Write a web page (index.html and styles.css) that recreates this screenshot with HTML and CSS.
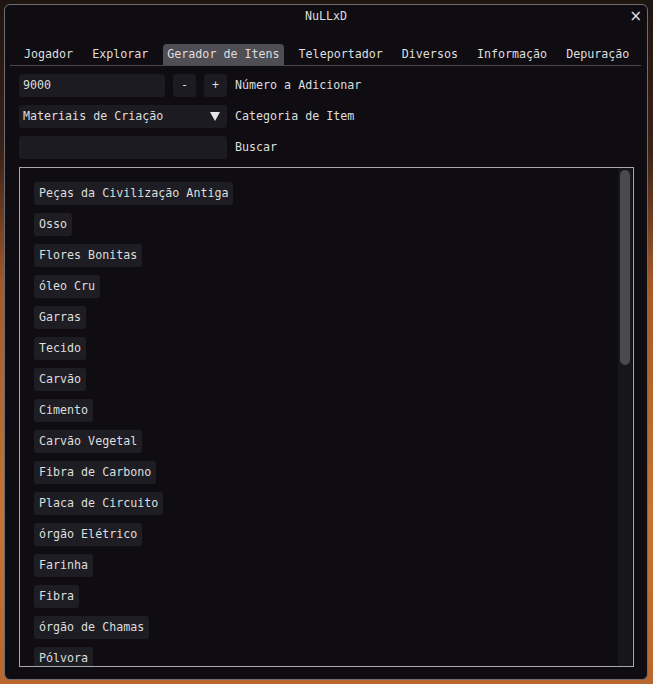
FILE: index.html
```html
<!DOCTYPE html>
<html>
<head>
<meta charset="utf-8">
<link rel="stylesheet" href="styles.css">
</head>
<body>
<div class="window">
  <div class="titlebar">
    <span class="title">NuLLxD</span>
    <span class="close">×</span>
  </div>
  <div class="tabbar">
    <span class="tab">Jogador</span>
    <span class="tab">Explorar</span>
    <span class="tab active">Gerador de Itens</span>
    <span class="tab">Teleportador</span>
    <span class="tab">Diversos</span>
    <span class="tab">Informação</span>
    <span class="tab">Depuração</span>
  </div>
  <div class="controls">
    <div class="row">
      <div class="frame num">9000</div>
      <div class="frame btn">-</div>
      <div class="frame btn">+</div>
      <span class="label">Número a Adicionar</span>
    </div>
    <div class="row">
      <div class="frame combo"><span>Materiais de Criação</span><svg class="arrow" width="10" height="9" viewBox="0 0 10 9"><polygon points="0,0 10,0 5,9" fill="#e6e6e6"/></svg></div>
      <span class="label">Categoria de Item</span>
    </div>
    <div class="row">
      <div class="frame search"></div>
      <span class="label">Buscar</span>
    </div>
  </div>
  <div class="child">
    <div class="list">
      <div class="item">Peças da Civilização Antiga</div>
      <div class="item">Osso</div>
      <div class="item">Flores Bonitas</div>
      <div class="item">óleo Cru</div>
      <div class="item">Garras</div>
      <div class="item">Tecido</div>
      <div class="item">Carvão</div>
      <div class="item">Cimento</div>
      <div class="item">Carvão Vegetal</div>
      <div class="item">Fibra de Carbono</div>
      <div class="item">Placa de Circuito</div>
      <div class="item">órgão Elétrico</div>
      <div class="item">Farinha</div>
      <div class="item">Fibra</div>
      <div class="item">órgão de Chamas</div>
      <div class="item">Pólvora</div>
    </div>
    <div class="scrollbar"><div class="grab"></div></div>
  </div>
</div>
</body>
</html>
```

FILE: styles.css
```css
html, body {
  margin: 0;
  padding: 0;
}
body {
  width: 653px;
  height: 684px;
  overflow: hidden;
  background: linear-gradient(180deg, #1e1410 0%, #3a2216 22%, #a65a2a 42%, #c47434 75%, #b8682e 100%);
  font-family: "DejaVu Sans Mono", "Liberation Mono", monospace;
  font-size: 11.66px;
  color: #dedede;
  padding-top: 4px;
  padding-left: 4px;
  box-sizing: border-box;
}
.window {
  width: 644px;
  height: 676px;
  box-sizing: border-box;
  background: #0f0d12;
  border: 1px solid #6e6d74;
  border-radius: 6px;
  display: flex;
  flex-direction: column;
  overflow: hidden;
}
.titlebar {
  height: 23px;
  display: flex;
  align-items: center;
  justify-content: center;
  position: relative;
}
.title {
  line-height: 23px;
}
.close {
  position: absolute;
  right: 5px;
  top: 0;
  line-height: 23px;
  font-family: "DejaVu Sans", sans-serif;
  font-size: 15px;
  color: #e0e0e0;
}
.tabbar {
  margin: 16px 6px 0 5px;
  padding-left: 10px;
  display: flex;
  gap: 11px;
  border-bottom: 1px solid #48474e;
  height: 21px;
}
.tab {
  padding: 0 4px;
  height: 21px;
  line-height: 21px;
  border-radius: 4px 4px 0 0;
  white-space: nowrap;
}
.tab.active {
  background: #4f4e55;
}
.controls {
  padding: 0 14px;
  margin-top: 8px;
  display: flex;
  flex-direction: column;
  gap: 8px;
}
.row {
  display: flex;
  align-items: center;
  gap: 8px;
  height: 23px;
}
.frame {
  background: #1c1b21;
  border-radius: 3px;
  height: 23px;
  line-height: 23px;
  box-sizing: border-box;
}
.num {
  width: 146px;
  padding-left: 4px;
}
.btn {
  width: 23px;
  text-align: center;
}
.combo {
  width: 208px;
  padding-left: 4px;
  padding-right: 7px;
  display: flex;
  align-items: center;
  justify-content: space-between;
}
.arrow {
  display: block;
}
.search {
  width: 208px;
}
.label {
  line-height: 23px;
}
.child {
  margin: 8px 13px 0 14px;
  height: 500px;
  box-sizing: border-box;
  border: 1px solid #a9a8b0;
  display: flex;
  overflow: hidden;
}
.list {
  flex: 1;
  padding: 14px 0 0 14px;
  display: flex;
  flex-direction: column;
  align-items: flex-start;
  gap: 8px;
  overflow: hidden;
}
.item {
  flex: none;
  background: #1e1d23;
  border-radius: 3px;
  height: 23px;
  line-height: 23px;
  padding: 0 5px;
  white-space: nowrap;
}
.scrollbar {
  width: 14px;
  margin-right: 1px;
  background: #17161b;
  padding: 2px 2px;
  box-sizing: border-box;
}
.grab {
  height: 195px;
  background: #4a4950;
  border-radius: 5px;
}
```
